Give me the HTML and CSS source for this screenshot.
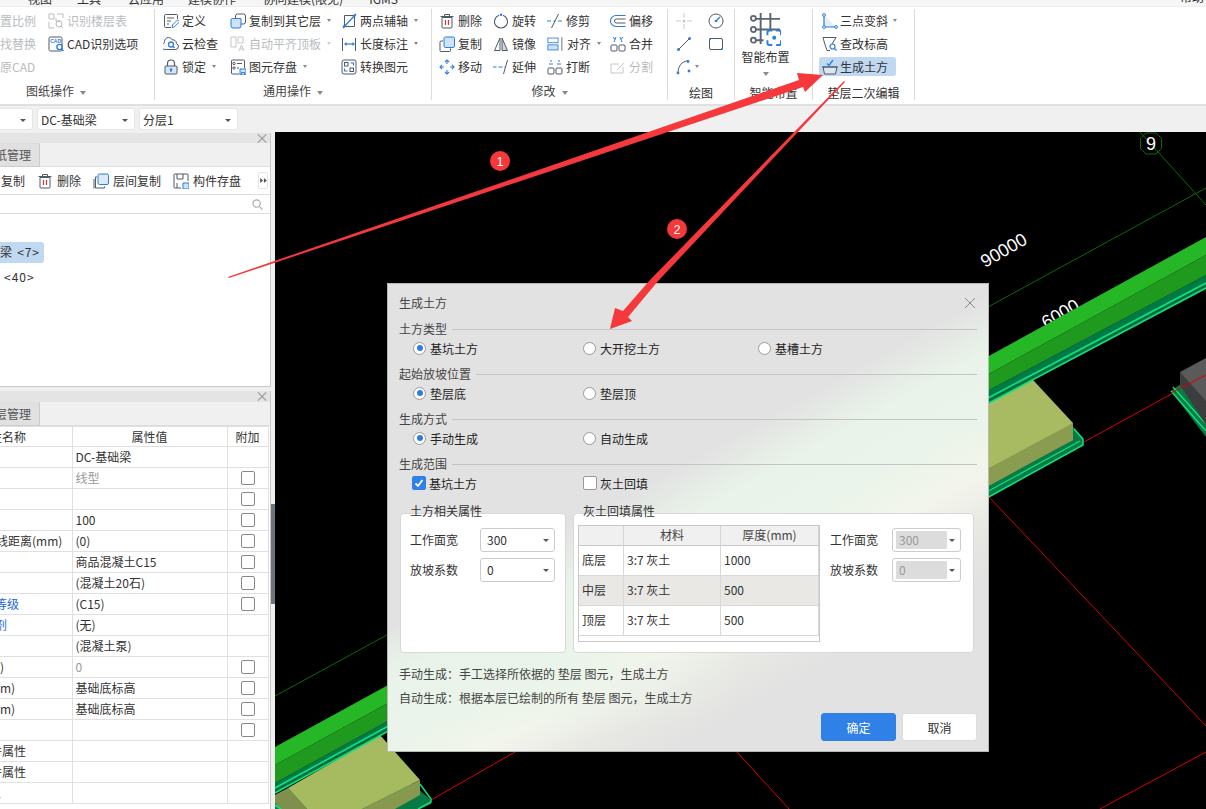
FILE: index.html
```html
<!DOCTYPE html>
<html lang="zh-CN">
<head>
<meta charset="utf-8">
<title>生成土方</title>
<link rel="stylesheet" href="styles.css">
</head>
<body>
<div class="app">
  <div class="tabs">
    <span class="tab t1">视图</span><span class="tab t2">工具</span><span class="tab t3">云应用</span><span class="tab t4">建模协作</span><span class="tab t5">协同建模(限免)</span><span class="tab t6">IGMS</span>
    <span class="tab-end">帮助</span>
  </div>

  <div class="ribbon">
    <section class="group g1">
      <div class="body cols1">
        <span class="item off">置比例</span>
        <span class="item off"><svg class="ic" viewBox="0 0 16 16" fill="none" stroke="#b8bcc0"><path d="M1 1h5v5H1zM9 1h6v4M1 9v6h5M8 5v3h5"/><circle cx="11" cy="11" r="3"/><path d="M13 13l2 2"/></svg>识别楼层表</span>
        <span class="item off">找替换</span>
        <span class="item"><svg class="ic" viewBox="0 0 16 16" fill="none"><rect x="1" y="1" width="13" height="14" rx="1.5" stroke="#4f5b66"/><text x="2.2" y="6.5" font-size="5" font-family="Liberation Sans" font-weight="700" fill="#2b7de1">CAD</text><circle cx="11.5" cy="11" r="2.6" fill="#fff" stroke="#2b7de1" stroke-width="1.4"/><path d="M13.4 13l2 2" stroke="#2b7de1" stroke-width="1.4"/></svg>CAD识别选项</span>
        <span class="item off">原CAD</span>
      </div>
      <div class="label">图纸操作<i class="caret"></i></div>
    </section>

    <section class="group g2">
      <div class="body cols2">
        <span class="item"><svg class="ic" viewBox="0 0 16 16" fill="none"><path d="M14.5 6V2.5a1 1 0 0 0-1-1h-11a1 1 0 0 0-1 1v11a1 1 0 0 0 1 1H8" stroke="#4f5b66"/><path d="M4 5h7M4 8h4M4 11h2" stroke="#4f5b66"/><path d="M9 14.5l.6-2.600 5-5 2 1.800-5 5z" fill="#fff" stroke="#2b7de1"/></svg>定义</span>
        <span class="item"><svg class="ic" viewBox="0 0 16 16" fill="none"><rect x="5.500" y="1" width="10" height="10" rx="2" fill="#fff" stroke="#4f5b66"/><path d="M1 7a1.500 1.500 0 0 1 1.500-1.500h8.500V13a2 2 0 0 1-2 2H3a2 2 0 0 1-2-2z" fill="#cfe2f7" stroke="#2b7de1"/></svg>复制到其它层<i class="caret"></i></span>
        <span class="item"><svg class="ic" viewBox="0 0 16 16" fill="none"><path d="M3.500 2.500h10v11h-10z" stroke="#4f5b66"/><path d="M2 15L15 1" stroke="#2b7de1" stroke-width="1.300"/><circle cx="3" cy="13.500" r="1.200" fill="#2b7de1"/><circle cx="13.500" cy="2.500" r="1.200" fill="#2b7de1"/></svg>两点辅轴<i class="caret"></i></span>
        <span class="item"><svg class="ic" viewBox="0 0 16 16" fill="none"><path d="M5.500 1C3 1 1.500 3 1.500 5c0 .500 0 .800.200 1.200A3.500 3.500 0 0 0 3.500 13h9a3 3 0 0 0 1-5.800C13.500 4 11 3 9.500 3.500 8.700 2 7.200 1 5.500 1z" transform="translate(0 .5)" stroke="#4f5b66"/><circle cx="8" cy="8.500" r="2.500" stroke="#2b7de1" stroke-width="1.300"/><path d="M10 10.500l1.600 1.500" stroke="#2b7de1" stroke-width="1.300"/></svg>云检查</span>
        <span class="item off"><svg class="ic" viewBox="0 0 16 16" fill="none" stroke="#c4c7ca"><path d="M1 1h5v10H1zM8 1h5v6H8zM9 15l2.500-6 2.500 6M10 13h3"/></svg>自动平齐顶板<i class="caret pale"></i></span>
        <span class="item"><svg class="ic" viewBox="0 0 16 16" fill="none"><path d="M1 2h1v13H1zM14 2h1v13h-1z" fill="#4f5b66"/><path d="M4 8h9" stroke="#2b7de1" stroke-width="1.200"/><path d="M3 8l2.500-2v4zM14 8l-2.500-2v4z" fill="#2b7de1"/></svg>长度标注<i class="caret"></i></span>
        <span class="item"><svg class="ic" viewBox="0 0 16 16" fill="none"><path d="M4.500 7V4.500a3.500 3.500 0 0 1 7 0V7" stroke="#4f5b66" stroke-width="1.200"/><rect x="2" y="7" width="12" height="8" rx="1" fill="#d6e6f8" stroke="#4f5b66"/><circle cx="8" cy="10.500" r="1.300" fill="#2b7de1"/><path d="M8 11v2" stroke="#2b7de1" stroke-width="1.200"/></svg>锁定<i class="caret"></i></span>
        <span class="item"><svg class="ic" viewBox="0 0 16 16" fill="none"><path d="M14.500 9V2a1 1 0 0 0-1-1h-11a1 1 0 0 0-1 1v12a1 1 0 0 0 1 1H9" stroke="#4f5b66"/><circle cx="4" cy="4.500" r="1.200" stroke="#4f5b66"/><circle cx="4" cy="9" r="1.200" stroke="#4f5b66"/><path d="M7 4.500h5M7 9h2" stroke="#4f5b66"/><path d="M10 10h6v6h-6z" fill="#cfe2f7" stroke="#2b7de1"/><path d="M11.500 16v-2.500h3V16" stroke="#2b7de1"/></svg>图元存盘<i class="caret"></i></span>
        <span class="item"><svg class="ic" viewBox="0 0 16 16" fill="none"><rect x="1" y="1" width="14" height="14" rx="2" stroke="#4f5b66"/><rect x="3.500" y="3.500" width="3.500" height="3.500" stroke="#4f5b66"/><rect x="9" y="9" width="3.500" height="3.500" stroke="#4f5b66"/><path d="M12.500 6.500V4H9.500M3.500 9.500V12h3" stroke="#2b7de1" stroke-width="1.200"/></svg>转换图元</span>
      </div>
      <div class="label">通用操作<i class="caret"></i></div>
    </section>

    <section class="group g3">
      <div class="body cols3">
        <span class="item"><svg class="ic" viewBox="0 0 16 16" fill="none"><path d="M3 4.500h10V14a1 1 0 0 1-1 1H4a1 1 0 0 1-1-1zM1.500 3.500h13M5.500 3V1.500h5V3" stroke="#4f5b66"/><path d="M6.500 7v5M9.500 7v5" stroke="#d9342b" stroke-width="1.200"/></svg>删除</span>
        <span class="item"><svg class="ic" viewBox="0 0 16 16" fill="none"><path d="M6 2.300a6.500 6.500 0 1 0 4 0" stroke="#4f5b66" stroke-width="1.100"/><circle cx="8" cy="1.800" r="1.300" fill="#2b7de1"/></svg>旋转</span>
        <span class="item"><svg class="ic" viewBox="0 0 16 16" fill="none"><path d="M0 8h4M6.500 8h2M11 8h4" stroke="#2b7de1" stroke-width="1.200"/><path d="M4.500 15L11.500 1" stroke="#4f5b66"/></svg>修剪</span>
        <span class="item"><svg class="ic" viewBox="0 0 16 16" fill="none"><path d="M15.500 2.500H6a5.500 5.500 0 0 0 0 11h9.500" stroke="#2b7de1" stroke-width="1.100"/><path d="M15.500 6H6.500a2 2 0 0 0 0 4h9" stroke="#4f5b66"/></svg>偏移</span>
        <span class="item"><svg class="ic" viewBox="0 0 16 16" fill="none"><rect x="5" y="1" width="10.500" height="10.500" rx="1.500" fill="#cfe2f7" stroke="#2b7de1"/><path d="M4 5H2a1 1 0 0 0-1 1v8.500a1 1 0 0 0 1 1h8.500a1 1 0 0 0 1-1v-2" stroke="#4f5b66"/></svg>复制</span>
        <span class="item"><svg class="ic" viewBox="0 0 16 16" fill="none"><path d="M7 2L1.500 14.500H7z" stroke="#4f5b66"/><path d="M9 2l5.500 12.500H9z" fill="#cfd6dd" stroke="#4f5b66"/></svg>镜像</span>
        <span class="item"><svg class="ic wide" viewBox="0 0 20 16" fill="none"><rect x="1" y="1" width="12" height="5.500" stroke="#2b7de1"/><rect x="1" y="9" width="12" height="6" fill="#cfe2f7" stroke="#2b7de1"/><path d="M17.500 0v16" stroke="#4f5b66"/></svg>对齐<i class="caret"></i></span>
        <span class="item"><svg class="ic" viewBox="0 0 16 16" fill="none"><rect x="1" y="9" width="6" height="6" rx="1" stroke="#4f5b66"/><rect x="9" y="9" width="6" height="6" rx="1" stroke="#4f5b66"/><path d="M3 1l2 2.500M6 1L4 6M13 1l-2 2.500M10 1l2 5" stroke="#2b7de1"/></svg>合并</span>
        <span class="item"><svg class="ic" viewBox="0 0 16 16" fill="none" stroke="#2b7de1" stroke-width="1.100"><path d="M1 8h4M11 8h4M8 1v4M8 11v4" /><path d="M6 3l2-2 2 2M6 13l2 2 2-2M3 6L1 8l2 2M13 6l2 2-2 2"/></svg>移动</span>
        <span class="item"><svg class="ic" viewBox="0 0 16 16" fill="none"><path d="M0 8h3.500M5.500 8h4M11.500 8h1" stroke="#2b7de1" stroke-width="1.200"/><path d="M10.500 15L14.500 1" stroke="#4f5b66"/></svg>延伸</span>
        <span class="item"><svg class="ic" viewBox="0 0 16 16" fill="none"><rect x="1" y="9" width="6" height="6" rx="1" stroke="#4f5b66"/><rect x="9" y="9" width="6" height="6" rx="1" stroke="#4f5b66"/><path d="M4 1v2M2 5h4M12 1v2M10 5h4" stroke="#2b7de1"/></svg>打断</span>
        <span class="item off"><svg class="ic" viewBox="0 0 16 16" fill="none" stroke="#c4c7ca"><path d="M13 8v6H1V5h8M7 11l7-7"/></svg>分割</span>
      </div>
      <div class="label">修改<i class="caret"></i></div>
    </section>

    <section class="group g4">
      <div class="body cols4">
        <svg class="ic" viewBox="0 0 16 16" fill="none"><path d="M0 8h5M11 8h5M8 0v5M8 11v5" stroke="#c6c9cc"/><circle cx="8" cy="8" r="1.500" fill="#c6c9cc"/></svg>
        <svg class="ic" viewBox="0 0 16 16" fill="none"><circle cx="8" cy="8" r="7" stroke="#4f5b66"/><path d="M8 8l4-4" stroke="#2b7de1" stroke-width="1.200"/><circle cx="8" cy="8" r="1.300" fill="#2b7de1"/></svg>
        <svg class="ic" viewBox="0 0 16 16" fill="none"><path d="M2.500 13.500l11-11" stroke="#4f5b66"/><circle cx="2.500" cy="13.500" r="1.500" fill="#2b7de1"/><circle cx="13.500" cy="2.500" r="1.500" fill="#2b7de1"/></svg>
        <svg class="ic" viewBox="0 0 16 16" fill="none"><rect x="1.500" y="2.500" width="13" height="11" rx="1.500" stroke="#4f5b66"/><circle cx="2" cy="3" r="1" fill="#2b7de1"/><circle cx="14" cy="13" r="1" fill="#2b7de1"/></svg>
        <span class="item"><svg class="ic" viewBox="0 0 16 16" fill="none"><path d="M2 14C2 7 6 2 12 2" stroke="#4f5b66"/><circle cx="2" cy="14" r="1.400" fill="#2b7de1"/><circle cx="12" cy="2.500" r="1.400" fill="#2b7de1"/><circle cx="13" cy="12" r="1.400" fill="#2b7de1"/></svg><i class="caret tight"></i></span>
      </div>
      <div class="label low">绘图</div>
    </section>

    <section class="group g5">
      <div class="body big">
        <svg class="bigic" viewBox="0 0 32 34" fill="none"><path d="M6 6h25M6 17h25M6 28h8M11 0v32M21 0v16" stroke="#5a6570" stroke-width="2"/><circle cx="3.500" cy="5.500" r="2.600" stroke="#5a6570" stroke-width="1.800"/><circle cx="3.500" cy="17" r="2.600" stroke="#5a6570" stroke-width="1.800"/><circle cx="3.500" cy="28" r="2.600" stroke="#5a6570" stroke-width="1.800"/><path d="M18 23v-3a2 2 0 0 1 2-2h3M27 18h3a2 2 0 0 1 2 2v3M32 28v3a2 2 0 0 1-2 2h-3M23 33h-3a2 2 0 0 1-2-2v-3" stroke="#2b7de1" stroke-width="2"/><circle cx="25" cy="25.500" r="2" fill="#2b7de1"/></svg>
        <span class="bigtext">智能布置</span>
        <i class="caret solo"></i>
      </div>
      <div class="label low">智能布置</div>
    </section>

    <section class="group g6">
      <div class="body cols6">
        <span class="item"><svg class="ic" viewBox="0 0 16 16" fill="none"><path d="M2 2l12 12H2z" fill="#e3eefa"/><path d="M2 2v12h12" stroke="#2b7de1" stroke-width="1.200"/><circle cx="2" cy="2" r="1.400" fill="#fff" stroke="#2b7de1"/><circle cx="2" cy="14" r="1.400" fill="#fff" stroke="#2b7de1"/><circle cx="14" cy="14" r="1.400" fill="#fff" stroke="#2b7de1"/></svg>三点变斜<i class="caret"></i></span>
        <span class="item"><svg class="ic" viewBox="0 0 16 16" fill="none"><path d="M1 1.500h13L10 8M5 14.500L2.500 7 1 1.500M5 14.500h3" stroke="#4f5b66"/><circle cx="10.500" cy="10.500" r="2.500" stroke="#2b7de1" stroke-width="1.200"/><path d="M12.500 12.500l2 2" stroke="#2b7de1" stroke-width="1.200"/></svg>查改标高</span>
        <span class="item active"><svg class="ic" viewBox="0 0 16 16" fill="none"><path d="M1 8h14l-1.500 7h-11z" fill="#dce6ef" stroke="#4f5b66"/><path d="M0 8h16" stroke="#4f5b66"/><path d="M5 4.500l2 2L11 1" stroke="#2b7de1" stroke-width="1.300"/></svg>生成土方</span>
      </div>
      <div class="label low">垫层二次编辑</div>
    </section>
  </div>

  <div class="toolbar">
    <div class="pick first"><i class="caret dark"></i></div>
    <div class="pick mid-pick">DC-基础梁<i class="caret dark"></i></div>
    <div class="pick">分层1<i class="caret dark"></i></div>
  </div>

  <div class="main">
    <aside class="side">
      <div class="panel top">
        <div class="p-head"><span class="x">×</span></div>
        <div class="p-tabs"><span class="p-tab">纸管理</span></div>
        <div class="p-tools">
          <span class="tool plain">复制</span>
          <span class="tool"><svg class="ic" viewBox="0 0 16 16" fill="none"><path d="M3 4.500h10V14a1 1 0 0 1-1 1H4a1 1 0 0 1-1-1zM1.500 3.500h13M5.500 3V1.500h5V3" stroke="#4f5b66"/><path d="M6.500 7v5M9.500 7v5" stroke="#d9342b" stroke-width="1.200"/></svg>删除</span>
          <span class="tool"><svg class="ic" viewBox="0 0 16 16" fill="none"><rect x="5" y="1" width="10.500" height="10.500" rx="1.500" fill="#dbe9fa" stroke="#2b7de1"/><path d="M4 4H2.500v11h9v-1.500M1 6v9.500" stroke="#4f5b66"/></svg>层间复制</span>
          <span class="tool"><svg class="ic" viewBox="0 0 16 16" fill="none"><path d="M15 8V2a1 1 0 0 0-1-1H2a1 1 0 0 0-1 1v12a1 1 0 0 0 1 1h6" stroke="#4f5b66"/><path d="M4 1v5h6V1M4 15v-5" stroke="#4f5b66"/><path d="M10 10h6v6h-6z" fill="#cfe2f7" stroke="#2b7de1"/></svg>构件存盘</span>
          <span class="more"><svg viewBox="0 0 8 6" fill="#555"><path d="M0 0l3.500 3L0 6zM4.500 0L8 3 4.500 6z"/></svg></span>
        </div>
        <div class="p-search"><svg class="sr" viewBox="0 0 12 12" fill="none" stroke="#a8a8a8" stroke-width="1.200"><circle cx="5" cy="5" r="4"/><path d="M8 8l3.500 3.500"/></svg></div>
        <div class="tree">
          <span class="pill">梁 &lt;7&gt;</span>
          <span class="leaf">&lt;40&gt;</span>
        </div>
      </div>
      <div class="panel bottom">
        <div class="p-head tall"><span class="x">×</span></div>
        <div class="p-tabs"><span class="p-tab">层管理</span></div>
        <table class="props">
          <colgroup><col class="c-a"><col class="c-b"><col class="c-c"></colgroup>
          <thead><tr><th class="in10">性名称</th><th>属性值</th><th>附加</th></tr></thead>
          <tbody>
            <tr><td></td><td>DC-基础梁</td><td></td></tr>
            <tr><td></td><td class="mute">线型</td><td><i class="cb"></i></td></tr>
            <tr><td></td><td></td><td><i class="cb"></i></td></tr>
            <tr><td></td><td>100</td><td><i class="cb"></i></td></tr>
            <tr><td class="in4">线距离(mm)</td><td>(0)</td><td><i class="cb"></i></td></tr>
            <tr><td></td><td>商品混凝土C15</td><td><i class="cb"></i></td></tr>
            <tr><td></td><td>(混凝土20石)</td><td><i class="cb"></i></td></tr>
            <tr><td class="blue in5">等级</td><td>(C15)</td><td><i class="cb"></i></td></tr>
            <tr><td class="blue in5">剂</td><td>(无)</td><td></td></tr>
            <tr><td></td><td>(混凝土泵)</td><td></td></tr>
            <tr><td class="in5">³)</td><td class="mute">0</td><td><i class="cb"></i></td></tr>
            <tr><td>m)</td><td>基础底标高</td><td><i class="cb"></i></td></tr>
            <tr><td>m)</td><td>基础底标高</td><td><i class="cb"></i></td></tr>
            <tr><td></td><td></td><td><i class="cb"></i></td></tr>
            <tr><td class="in10">件属性</td><td></td><td></td></tr>
            <tr><td class="in10">件属性</td><td></td><td></td></tr>
            <tr><td class="blue in11">土</td><td></td><td></td></tr>
          </tbody>
        </table>
      </div>
    </aside>
    <div class="split"><i class="handle"></i></div>

    <div class="canvas">
      <svg class="scene" viewBox="275 132 931 677" preserveAspectRatio="none">
        <g fill="none" stroke="#0a6a0a" stroke-width="1">
          <path d="M275 696L1206 188"/>
          <path d="M1140 132L1206 205"/>
          <path d="M1146 133l10 0 5.500 5.500v10l-5.500 5.500h-10l-5.500-5.500v-10z"/>
        </g>
        <text class="cad" x="1151" y="150" text-anchor="middle">9</text>
        <text class="cad" transform="translate(985 268) rotate(-30)">90000</text>
        <text class="cad" transform="translate(1046 329) rotate(-30)">6000</text>
        <g fill="none" stroke="#d80000" stroke-width="1">
          <path d="M1084 442L1206 375M989 497L1206 726M1206 752L1100 809M515 752L431 800M737 752L789 809"/>
        </g>
        <!-- block right of dialog -->
        <path d="M985 393L1033 380L1083 438L1083 445L985 499z" fill="#087a45"/>
        <path d="M985 395L1033 380L1073 423V440L985 480z" fill="#a8bb62"/>
        <path d="M985 470L1073 423V440L985 488z" fill="#8a9c50"/>
        <path d="M985 499L1083 445V439L1074 429" stroke="#0ce27e" stroke-width="1.500" fill="none"/>
        <path d="M985 493L1080 441" stroke="#0ce27e" stroke-width="1.200" fill="none"/>
        <!-- block lower-left -->
        <path d="M275 795L370 748L431 800V804L420 809H275z" fill="#087a45"/>
        <path d="M288 788L380 735L420 780L362 809H307z" fill="#a6ba60"/>
        <path d="M420 780V795L395 809H362z" fill="#87994e"/>
        <path d="M288 788L307 809H281L275 803V795z" fill="#7f8f4c"/>
        <path d="M420 784L431 799V802L418 809" stroke="#0ce27e" stroke-width="1.500" fill="none"/>
        <path d="M275 805L281 809" stroke="#0ce27e" stroke-width="2" fill="none"/>
        <!-- beam -->
        <path d="M275 783L989 390L1206 275V288L989 403L275 793z" fill="#007a45"/>
        <path d="M275 747L1206 237V255L275 765z" fill="#25b726"/>
        <path d="M275 765L1206 255V275L989 390L275 783z" fill="#1f9a1f"/>
        <path d="M275 793L989 403L1206 288" stroke="#0ce27e" stroke-width="1.600" fill="none"/>
        <path d="M275 788L989 397.500L1206 283" stroke="#0ce27e" stroke-width="1.600" fill="none"/>
        <path d="M275 790.500L989 400.300L1206 285.500" stroke="#0a5a3a" stroke-width="1" fill="none"/>
        <!-- right grey block -->
        <path d="M1171 391L1181 384L1206 412V437z" fill="#087a45"/>
        <path d="M1171 391L1206 431M1173 387L1206 424" stroke="#0ce27e" stroke-width="1.400" fill="none"/>
        <path d="M1180 372L1206 358V411L1180 380z" fill="#5a5a5a"/>
        <path d="M1180 372L1206 401V425L1180 385z" fill="#3d3d3d"/>
        <path d="M1171 393L1206 375" stroke="#d80000" fill="none"/>
      </svg>

      <div class="dialog">
        <div class="d-title">生成土方<span class="d-x"><svg viewBox="0 0 12 12" fill="none" stroke="#8a8a8a"><path d="M1 1l10 10M11 1L1 11"/></svg></span></div>

        <div class="sec">土方类型</div>
        <div class="opts">
          <label class="opt"><span class="radio on"></span>基坑土方</label>
          <label class="opt"><span class="radio"></span>大开挖土方</label>
          <label class="opt"><span class="radio"></span>基槽土方</label>
        </div>
        <div class="sec">起始放坡位置</div>
        <div class="opts">
          <label class="opt"><span class="radio on"></span>垫层底</label>
          <label class="opt"><span class="radio"></span>垫层顶</label>
        </div>
        <div class="sec">生成方式</div>
        <div class="opts">
          <label class="opt"><span class="radio on"></span>手动生成</label>
          <label class="opt"><span class="radio"></span>自动生成</label>
        </div>
        <div class="sec">生成范围</div>
        <div class="opts">
          <label class="opt chk"><span class="box on"><svg viewBox="0 0 12 12" fill="none" stroke="#fff" stroke-width="1.800"><path d="M2.500 6.500l2.500 2.500 4.500-6"/></svg></span>基坑土方</label>
          <label class="opt chk"><span class="box"></span>灰土回填</label>
        </div>

        <div class="panels">
          <div class="fs fs-a">
            <span class="legend">土方相关属性</span>
            <div class="frow"><span class="flabel">工作面宽</span><div class="sel">300<i class="caret dark"></i></div></div>
            <div class="frow"><span class="flabel">放坡系数</span><div class="sel">0<i class="caret dark"></i></div></div>
          </div>
          <div class="fs fs-b">
            <span class="legend">灰土回填属性</span>
            <div class="grid">
              <div class="g-h"></div><div class="g-h mid">材料</div><div class="g-h mid">厚度(mm)</div>
              <div class="g-c">底层</div><div class="g-c">3:7 灰土</div><div class="g-c">1000</div>
              <div class="g-c sel-row">中层</div><div class="g-c sel-row">3:7 灰土</div><div class="g-c sel-row">500</div>
              <div class="g-c">顶层</div><div class="g-c">3:7 灰土</div><div class="g-c">500</div>
            </div>
            <div class="fs-side">
              <div class="frow"><span class="flabel">工作面宽</span><div class="sel dis"><b>300</b><i class="caret dark"></i></div></div>
              <div class="frow"><span class="flabel">放坡系数</span><div class="sel dis"><b>0</b><i class="caret dark"></i></div></div>
            </div>
          </div>
        </div>

        <p class="note">手动生成：手工选择所依据的 垫层 图元，生成土方</p>
        <p class="note">自动生成：根据本层已绘制的所有 垫层 图元，生成土方</p>
        <div class="btns"><button class="btn primary">确定</button><button class="btn">取消</button></div>
      </div>
    </div>
  </div>

  <svg class="marks" viewBox="0 0 1206 809">
    <path d="M228 277L799 80L797 73L823 75L805 92L803 87L229 278z" fill="#f5383b"/>
    <path d="M845 82L659 280L628 317L632 321L610 329L615 308L623 311L650 280L844 81z" fill="#f5383b"/>
    <circle cx="500" cy="161" r="10" fill="#f5383b"/>
    <text class="num" x="500" y="165.500">1</text>
    <circle cx="677" cy="229" r="10" fill="#f5383b"/>
    <text class="num" x="677" y="233.500">2</text>
  </svg>
</div>
</body>
</html>
```
FILE: styles.css
```css
*{box-sizing:border-box}
html,body{margin:0;height:100%;overflow:hidden}
body{font-family:"Noto Sans CJK SC","Noto Sans",sans-serif;font-size:12px;color:#333;background:#f0f0f0}
i{font-style:normal}
.app{position:relative;width:1206px;height:809px;overflow:hidden;display:flex;flex-direction:column}

.tabs{height:6px;background:#f6f6f6;overflow:hidden;flex:none;display:flex;font-size:12px;line-height:14px}
.tab{margin-top:-8px;white-space:nowrap}
.t1{margin-left:28px}.t2{margin-left:25px}.t3{margin-left:27px}.t4{margin-left:24px}.t5{margin-left:27px}.t6{margin-left:26px}
.tab-end{margin-left:auto;margin-right:2px;margin-top:-10px;color:#222}

.ribbon{height:100px;flex:none;display:flex;background:#fff;border-bottom:2px solid #e0e0e0;border-top:1px solid #eee;padding-top:2px}
.group{display:flex;flex-direction:column;height:91px;border-right:1px solid #dcdcdc;flex:none}
.body{height:70px;display:grid;grid-auto-rows:23px;align-items:center}
.label{height:21px;line-height:23px;text-align:center;color:#444;white-space:nowrap}
.label.low{line-height:28px;color:#333}
.item{display:flex;align-items:center;gap:3px;white-space:nowrap;color:#333;height:20px}
.item.off{color:#b8bcc0}
.ic{width:16px;height:16px;flex:none;display:block}
.ic.wide{width:17px}
.caret{display:inline-block;width:0;height:0;border:2.500px solid transparent;border-top:3px solid #888;border-bottom:0;margin-left:3px;vertical-align:middle}
.label .caret{border-width:3.500px;border-top-width:4px;border-bottom-width:0;margin-left:6px}
.caret.pale{border-top-color:#ccc}
.caret.tight{margin-left:0}
.caret.dark{border-width:3px;border-top:3px solid #555;border-bottom:0}

.g1{width:155px}
.g1 .label{padding-right:42px}
.cols1{grid-template-columns:48px 1fr}
.g2{width:277px}
.cols2{grid-template-columns:67px 111px 1fr;padding-left:8px}
.g3{width:236px}
.cols3{grid-template-columns:54px 54px 63px 1fr;padding-left:7px}
.g4{width:67px}
.cols4{grid-template-columns:32px 26px;padding-left:8px}
.g5{width:78px}
.big{display:flex;flex-direction:column;align-items:center;height:70px;padding-right:16px}
.bigic{width:31px;height:33px;margin-top:4px;flex:none}
.bigtext{color:#333;margin-top:2px;line-height:18px}
.caret.solo{margin:6px 0 0 0;border-width:3.500px;border-top-width:4px;border-bottom-width:0}
.g6{width:102px;border-right:1px solid #dcdcdc}
.cols6{grid-template-columns:1fr;padding-left:6px;justify-items:start}
.cols6 .item{padding:0 8px 0 3px;gap:2px}
.item.active{background:#c0d8f0;border-radius:3px;height:19px}

.toolbar{height:26px;flex:none;display:flex;gap:4px;padding-top:2px;background:#f0f0f0}
.pick{position:relative;width:99px;height:22px;line-height:21px;background:#fff;border:1px solid #e6e6e6;border-radius:3px;padding-left:3px}
.pick.mid-pick{width:98px}
.pick.first{width:33px;border-left:0;border-radius:0 3px 3px 0}
.pick .caret{position:absolute;right:6px;top:10px}

.main{flex:1;display:flex;min-height:0}
.side{width:271px;flex:none;display:flex;flex-direction:column;gap:4px;padding-top:1px}
.panel{background:#fff;border-right:1px solid #c8c8c8;display:flex;flex-direction:column;min-height:0}
.panel.top{height:254px;border-bottom:1px solid #c8c8c8}
.panel.bottom{flex:1}
.p-head{height:10px;background:#e4e4e4;position:relative;flex:none}
.p-head.tall{height:11px}
.x{position:absolute;right:1px;top:-3px;font-size:14px;line-height:14px;color:#999}
.p-tabs{height:24px;background:#f0f0f0;border-bottom:1px solid #dcdcdc;flex:none;display:flex}
.p-tab{width:40px;background:#e0e0e0;border-right:1px solid #ccc;border-bottom:1px solid #ccc;line-height:22px;color:#555;white-space:nowrap;overflow:hidden;font-size:12px;height:24px;border-top:1px solid #ddd;text-indent:-5px}
.p-tools{height:28px;flex:none;border-bottom:1px solid #dcdcdc;display:flex;align-items:center;gap:12px;position:relative}
.tool{display:flex;align-items:center;gap:4px;white-space:nowrap;color:#333}
.tool.plain{margin-left:1px}
.more{position:absolute;right:2px;top:5px;width:10px;height:17px;border:1px solid #e4e4e4;border-radius:2px;display:flex;align-items:center;justify-content:center}
.more svg{width:7px;height:5px;display:block}
.p-search{height:19px;flex:none;border-bottom:1px solid #dcdcdc;position:relative}
.sr{position:absolute;right:7px;top:4px;width:11px;height:11px}
.tree{flex:1;display:flex;flex-direction:column;align-items:flex-start;padding-top:28px}
.pill{height:21px;line-height:20px;background:#c0d8f0;border-radius:0 3px 3px 0;width:44px;white-space:nowrap;word-spacing:1px;letter-spacing:.8px}
.leaf{margin:3px 0 0 4px;line-height:22px;letter-spacing:1px}

.props{border-collapse:collapse;table-layout:fixed;width:268px;flex:none;background:#fff}
.c-a{width:72px}.c-b{width:155px}.c-c{width:41px}
.props th,.props td{height:21px;padding:0 0 0 3px;border:1px solid #e0e0e0;border-left-width:0;font-weight:400;text-align:left;white-space:nowrap;overflow:hidden;line-height:18px;color:#333;font-size:12px}
.props th{height:20px;text-align:center;padding:0}
.props th:first-child{text-align:left}
.props td:first-child,.props th:first-child{padding-left:0;border-right:1px solid #e0e0e0}
.props td:last-child,.props th:last-child{border-left:1px solid #e0e0e0;border-right:1px solid #e0e0e0;text-align:center;padding:0}
.props .mute{color:#999}
.props .blue{color:#1a66e0}
.in10{text-indent:-10px}.in5{text-indent:-5px}.in11{text-indent:-11px}.in4{text-indent:-4px}
.cb{display:block;width:14px;height:14px;margin:0 auto;border:1px solid #888;border-radius:2px;background:#fff}

.split{width:4px;flex:none;background:#f0f0f0;position:relative}
.handle{position:absolute;left:0;top:372px;width:4px;height:100px;background:#6a7580}

.canvas{flex:1;background:#000;position:relative;overflow:hidden}
.scene{display:block;width:931px;height:677px}
.cad{fill:#fff;font-family:"Liberation Sans",sans-serif;font-size:18px}

.dialog{position:absolute;left:112px;top:151px;width:602px;height:469px;border:1px solid #b8b8b8;padding:0 11px;color:#333;
  background:radial-gradient(ellipse 240px 60px at 130px 395px,rgba(234,244,234,.95),rgba(234,244,234,0)),linear-gradient(151deg,#e2e2e2 0%,#e2e2e2 43%,#e9f3e9 50%,#ebf4ea 58%,#f3f5ec 65%,#e7e7e3 72%,#e2e2e2 78%,#e2e2e2 100%)}
.d-title{height:35px;line-height:38px;font-size:12px;color:#444;position:relative}
.d-x{position:absolute;right:1px;top:13px;width:12px;height:12px}
.d-x svg{display:block}
.sec{height:20px;line-height:20px;color:#444;display:flex;align-items:center;gap:5px}
.sec::after{content:"";flex:1;height:1px;background:#c4c4c4}
.opts{height:25px;display:grid;grid-template-columns:170px 175px 1fr;padding:0 0 7px 14px;align-items:center}
.opt{display:flex;align-items:center;gap:4px;color:#222;white-space:nowrap}
.radio{width:13px;height:13px;border-radius:50%;border:1px solid #9a9a9a;background:#fff;flex:none;position:relative}
.radio.on::after{content:"";position:absolute;left:2.500px;top:2.500px;width:6px;height:6px;border-radius:50%;background:#2b7de1}
.opt.chk{gap:3px}
.opts .chk:first-child{margin-left:-1px}
.box{width:14px;height:14px;border:1px solid #999;border-radius:2px;background:#fff;flex:none}
.box.on{background:#2f80e7;border-color:#2f80e7}
.box svg{display:block;width:12px;height:12px}

.panels{display:flex;gap:7px;height:140px;margin:14px 3px 0 1px}
.fs{position:relative;background:#fff;border:1px solid #d8d8d8;border-radius:4px}
.fs-a{width:166px;padding:14px 0 0 9px}
.fs-b{flex:1;display:flex;padding:11px 0 0 4px}
.legend{position:absolute;left:9px;top:-11px;line-height:16px;color:#333}
.frow{display:flex;align-items:center;height:24px;margin-bottom:6px}
.flabel{width:70px;color:#333;padding-bottom:2px}
.fs-side .flabel{width:62px}
.fs-side{padding:3px 0 0 10px}
.sel{position:relative;width:75px;height:24px;line-height:22px;padding-left:6px;background:#fff;border:1px solid #ccc;border-radius:3px}
.sel .caret{position:absolute;right:5px;top:10px}
.sel.dis{width:69px;padding-left:3px}
.sel.dis b{display:block;font-weight:400;width:51px;height:18px;line-height:17px;margin-top:2px;background:#dcdcdc;color:#999;padding-left:3px;border-radius:1px}
.grid{width:242px;height:117px;display:grid;grid-template-columns:45px 97px 1fr;grid-template-rows:20px 30px 30px 30px;border:1px solid #c8c8c8;align-content:start;background:#fff;flex:none}
.g-h{background:#f0f0f0;border-right:1px solid #d4d4d4;border-bottom:1px solid #c8c8c8;line-height:18px;color:#444}
.g-h.mid{text-align:center}
.g-c{border-right:1px solid #d8d8d8;border-bottom:1px solid #d8d8d8;padding-left:3px;line-height:27px;color:#333}
.sel-row{background:#e9e8e4}
.note{margin:0;height:24px;line-height:24px;color:#444}
.note:first-of-type{margin-top:9px}
.btns{display:flex;justify-content:flex-end;gap:6px;margin-top:3px}
.btn{width:75px;height:28px;border:1px solid #ddd;border-radius:3px;background:#fff;font:inherit;color:#333;padding:0}
.btn.primary{background:#2f80e7;border-color:#2f80e7;color:#fff}

.marks{position:absolute;left:0;top:0;width:1206px;height:809px;pointer-events:none}
.num{fill:#fff;font-family:"Liberation Sans",sans-serif;font-size:12px;text-anchor:middle}
```
